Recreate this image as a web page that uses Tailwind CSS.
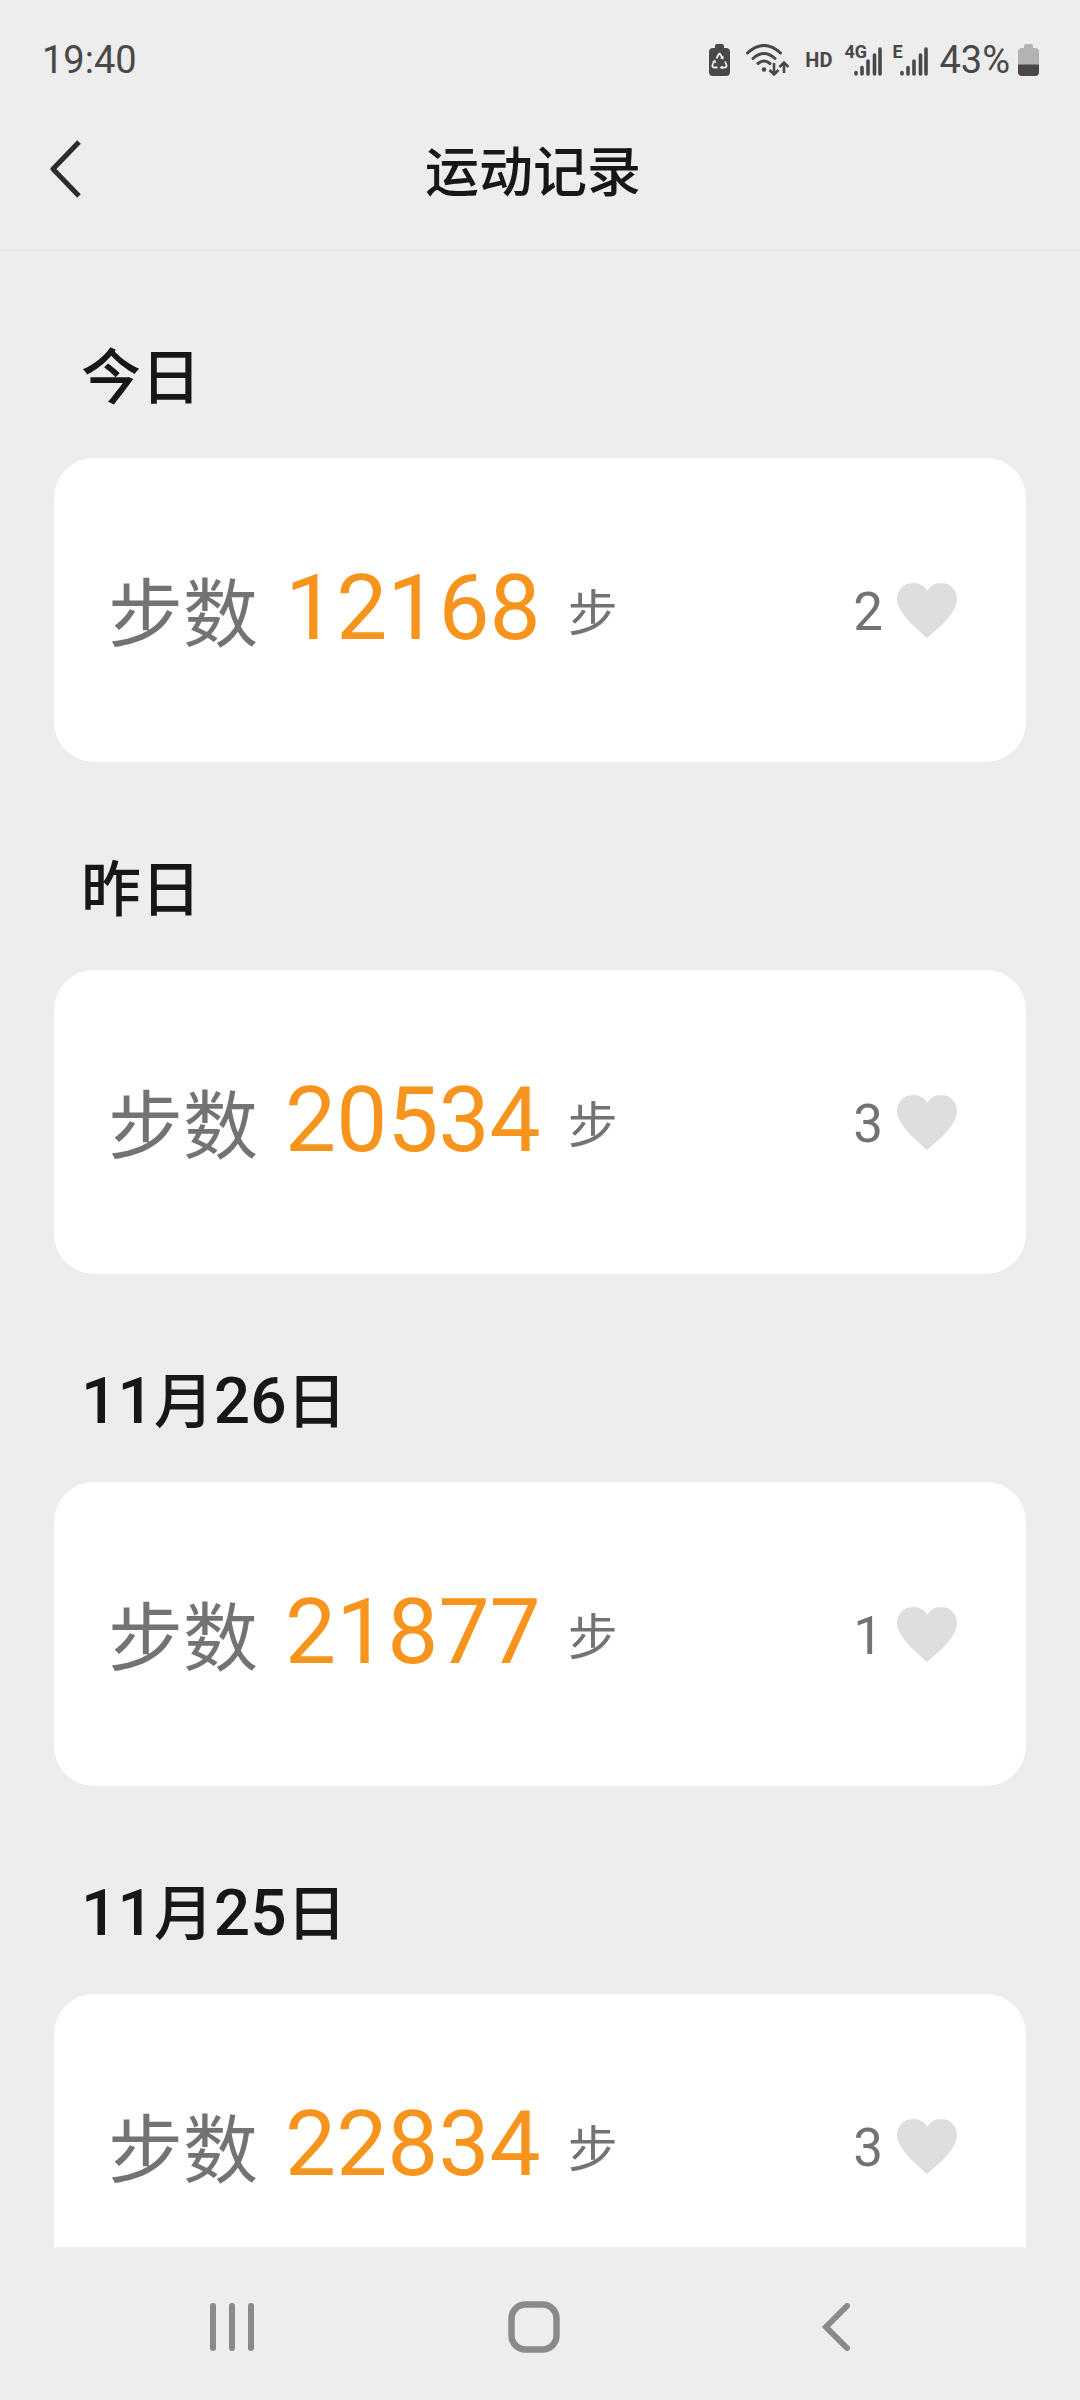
<!DOCTYPE html>
<html lang="zh-CN">
<head>
<meta charset="utf-8">
<meta name="viewport" content="width=device-width, initial-scale=1">
<title>运动记录</title>
<script src="https://cdn.jsdelivr.net/npm/@tailwindcss/browser@4"></script>
</head>
<body class="flex h-screen flex-col bg-[#ededed] font-[Roboto,'Noto_Sans_CJK_SC',sans-serif] text-[#171717]">

<svg class="hidden" aria-hidden="true">
  <symbol id="heart" viewBox="0 0 60 55"><path d="M30 55C14 41 0 28 0 16C0 6 7 0 16.500 0C23 0 28 3 30.500 8C33 3 37.500 0 44 0C53 0 60 6 60 16C60 28 47 41 30 55Z" fill="#dedede"/></symbol>
  <symbol id="signal" viewBox="0 0 28 29"><path d="M2 25.500V27M8 20.500V27M14 14V27M20.500 8V27M26 2V27" fill="none" stroke="#484848" stroke-width="3.600" stroke-linecap="round"/></symbol>
</svg>

<!-- Status bar -->
<div class="flex h-[92px] shrink-0 items-center justify-between pt-7 pr-[41px] pl-[42px] text-[38px] leading-none text-[#484848]">
  <span>19:40</span>
  <div class="flex items-center">
    <svg class="h-8 w-[21px]" viewBox="0 0 21 32" aria-label="省电模式">
      <path d="M6 4V2Q6 0 8 0H13Q15 0 15 2V4H17Q21 4 21 8V28Q21 32 17 32H4Q0 32 0 28V8Q0 4 4 4Z" fill="#484848"/>
      <g fill="none" stroke="#ededed" stroke-width="1.800" stroke-linejoin="round"><path d="M7.500 14.500L9.500 10.500Q10.500 9 11.500 10.500L13.500 14.500M16 17.500L17.500 21Q18 23.500 15.500 23.500H12.500M8.500 23.500H5.500Q3 23.500 3.500 21L5 17.500"/></g>
      <path d="M14.500 11.500V15.500L11 14.500ZM13.500 21.500V25.500L10.500 23.500ZM3 18L6 15.500L7.500 19Z" fill="#ededed"/>
    </svg>
    <svg class="ml-4 h-8 w-[43px]" viewBox="0 0 43 32" aria-label="无线网络">
      <g fill="none" stroke="#484848" stroke-width="3" stroke-linecap="round"><path d="M1.500 9Q18 -6 34.500 9M7 14.500Q18 4.500 29 14.500M12 19.500Q18 14.500 24 19.500"/></g>
      <circle cx="18" cy="25.500" r="2.300" fill="#484848"/>
      <path d="M28 19V30M23.500 26L28 30.500L32.500 26M38 29V19M33.500 23L38 18.500L42.500 23" fill="none" stroke="#484848" stroke-width="2.600"/>
    </svg>
    <span class="ml-4 text-[20px] font-bold">HD</span>
    <div class="relative ml-3 flex h-8 w-[38px] items-end justify-end">
      <span class="absolute -top-px left-0 text-[18px] leading-none font-bold">4G</span>
      <svg class="h-[29px] w-7" aria-label="信号"><use href="#signal"/></svg>
    </div>
    <div class="relative ml-[10px] flex h-8 w-9 items-end justify-end">
      <span class="absolute -top-px left-0 text-[18px] leading-none font-bold">E</span>
      <svg class="h-[29px] w-7" aria-label="信号"><use href="#signal"/></svg>
    </div>
    <span class="ml-[11px]">43%</span>
    <svg class="ml-2 h-8 w-[21px]" viewBox="0 0 21 32" aria-label="电池">
      <path d="M6 4V2Q6 0 8 0H13Q15 0 15 2V4H17Q21 4 21 8V21H0V8Q0 4 4 4Z" fill="#b3b3b3"/>
      <path d="M0 20.500H21V28Q21 32 17 32H4Q0 32 0 28Z" fill="#484848"/>
    </svg>
  </div>
</div>

<!-- Title bar -->
<header class="relative z-10 grid h-[158px] shrink-0 grid-cols-[81px_1fr_95px] items-center pb-1 shadow-[0_1px_0_#e4e4e4]">
  <button type="button" aria-label="返回" class="flex h-20 items-center justify-end">
    <svg class="h-[58px] w-[31px]" viewBox="0 0 31 58"><path d="M29 2L3 29L29 56" fill="none" stroke="#2c2c2c" stroke-width="5" stroke-linejoin="round"/></svg>
  </button>
  <h1 class="text-center font-['Noto_Sans_CJK_SC',sans-serif] text-[54px] leading-none font-medium">运动记录</h1>
</header>

<!-- Daily records -->
<main class="min-h-0 flex-1 overflow-y-auto px-[54px] [scrollbar-width:none]">
  <section>
    <h2 class="flex h-[208px] items-center pt-[38px] pl-[27px] font-['Noto_Sans_CJK_SC',sans-serif] text-[60px] leading-none font-medium">今日</h2>
    <div class="flex h-[304px] items-center justify-between rounded-[40px] bg-white pr-[69px] pl-[54px] leading-none text-[#737373]">
      <div class="flex items-center gap-[27px] pb-[3px]">
        <span class="font-['Noto_Sans_CJK_SC',sans-serif] text-[75px]">步数</span>
        <strong class="text-[91px] font-normal text-[#f7941d]">12168</strong>
        <span class="font-['Noto_Sans_CJK_SC',sans-serif] text-[50px]">步</span>
      </div>
      <button type="button" aria-label="点赞 2" class="flex items-center gap-[14px] text-[53px] leading-none"><span class="pt-1">2</span><svg class="h-[55px] w-[60px]"><use href="#heart"/></svg></button>
    </div>
  </section>
  <section>
    <h2 class="flex h-[208px] items-center pt-[38px] pl-[27px] font-['Noto_Sans_CJK_SC',sans-serif] text-[60px] leading-none font-medium">昨日</h2>
    <div class="flex h-[304px] items-center justify-between rounded-[40px] bg-white pr-[69px] pl-[54px] leading-none text-[#737373]">
      <div class="flex items-center gap-[27px] pb-[3px]">
        <span class="font-['Noto_Sans_CJK_SC',sans-serif] text-[75px]">步数</span>
        <strong class="text-[91px] font-normal text-[#f7941d]">20534</strong>
        <span class="font-['Noto_Sans_CJK_SC',sans-serif] text-[50px]">步</span>
      </div>
      <button type="button" aria-label="点赞 3" class="flex items-center gap-[14px] text-[53px] leading-none"><span class="pt-1">3</span><svg class="h-[55px] w-[60px]"><use href="#heart"/></svg></button>
    </div>
  </section>
  <section>
    <h2 class="flex h-[208px] items-center pt-[38px] pl-[27px] font-['Noto_Sans_CJK_SC',sans-serif] text-[60px] leading-none font-medium"><span><span class="font-[Roboto] text-[64px] leading-[0]">11</span>月<span class="font-[Roboto] text-[64px] leading-[0]">26</span>日</span></h2>
    <div class="flex h-[304px] items-center justify-between rounded-[40px] bg-white pr-[69px] pl-[54px] leading-none text-[#737373]">
      <div class="flex items-center gap-[27px] pb-[3px]">
        <span class="font-['Noto_Sans_CJK_SC',sans-serif] text-[75px]">步数</span>
        <strong class="text-[91px] font-normal text-[#f7941d]">21877</strong>
        <span class="font-['Noto_Sans_CJK_SC',sans-serif] text-[50px]">步</span>
      </div>
      <button type="button" aria-label="点赞 1" class="flex items-center gap-[14px] text-[53px] leading-none"><span class="pt-1">1</span><svg class="h-[55px] w-[60px]"><use href="#heart"/></svg></button>
    </div>
  </section>
  <section>
    <h2 class="flex h-[208px] items-center pt-[38px] pl-[27px] font-['Noto_Sans_CJK_SC',sans-serif] text-[60px] leading-none font-medium"><span><span class="font-[Roboto] text-[64px] leading-[0]">11</span>月<span class="font-[Roboto] text-[64px] leading-[0]">25</span>日</span></h2>
    <div class="flex h-[304px] items-center justify-between rounded-[40px] bg-white pr-[69px] pl-[54px] leading-none text-[#737373]">
      <div class="flex items-center gap-[27px] pb-[3px]">
        <span class="font-['Noto_Sans_CJK_SC',sans-serif] text-[75px]">步数</span>
        <strong class="text-[91px] font-normal text-[#f7941d]">22834</strong>
        <span class="font-['Noto_Sans_CJK_SC',sans-serif] text-[50px]">步</span>
      </div>
      <button type="button" aria-label="点赞 3" class="flex items-center gap-[14px] text-[53px] leading-none"><span class="pt-1">3</span><svg class="h-[55px] w-[60px]"><use href="#heart"/></svg></button>
    </div>
  </section>
</main>

<!-- System navigation -->
<nav class="grid h-[153px] shrink-0 grid-cols-3 items-center pt-1.5 pr-[93px] pl-[81px]">
  <button type="button" aria-label="最近任务" class="flex justify-center"><svg class="h-12 w-[46px]" viewBox="0 0 46 48"><path d="M4 3V45M23 3V45M42 3V45" fill="none" stroke="#8a8a8a" stroke-width="6" stroke-linecap="round"/></svg></button>
  <button type="button" aria-label="主页" class="flex justify-center"><svg class="h-[52px] w-[52px]" viewBox="0 0 52 52"><rect x="3.500" y="3.500" width="45" height="45" rx="14" fill="none" stroke="#8a8a8a" stroke-width="6.500"/></svg></button>
  <button type="button" aria-label="返回" class="flex justify-center"><svg class="h-12 w-7" viewBox="0 0 28 48"><path d="M25 3L4 24L25 45" fill="none" stroke="#8a8a8a" stroke-width="6" stroke-linecap="round"/></svg></button>
</nav>
</body>
</html>
